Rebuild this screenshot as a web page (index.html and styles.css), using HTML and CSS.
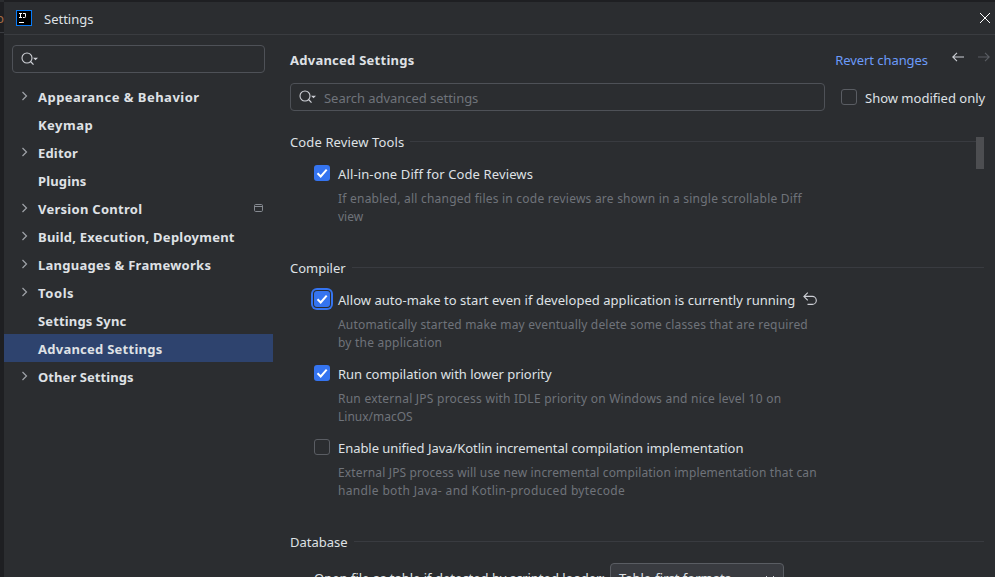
FILE: index.html
```html
<!DOCTYPE html>
<html lang="en">
<head>
<meta charset="utf-8">
<title>Settings</title>
<link rel="stylesheet" href="styles.css">
</head>
<body>
<svg class="defs" width="0" height="0">
  <symbol id="chevron" viewBox="0 0 16 16"><path d="M5.500 4l4 4-4 4" fill="none" stroke="#a0a3a9" stroke-width="1.2"/></symbol>
  <symbol id="search" viewBox="0 0 18 14"><circle cx="6" cy="6" r="5" fill="none" stroke="#ced0d6" stroke-width="1.1"/><path d="M9.500 9.500l3 3.200" stroke="#ced0d6" stroke-width="1.2"/><path d="M12 5.700h5l-2.500 2.600z" fill="#ced0d6"/></symbol>
  <symbol id="check" viewBox="0 0 16 16"><path d="M3.5 8.3l3.2 3.2 6-6.9" fill="none" stroke="#fff" stroke-width="2"/></symbol>
</svg>
<div class="backdrop"><span class="sliver">p</span><i class="edge"></i></div>
<div class="window">
  <header class="titlebar">
    <svg class="logo" width="16" height="16" viewBox="0 0 16 16"><rect x=".5" y=".5" width="15" height="15" fill="#000" stroke="#087cfa"/><path d="M3 3.5h3M4.5 3.5v4M3 7.5h3M7 3.5h2.5v3.2q0 .8-.8.8H7M3 12.5h5" fill="none" stroke="#fff"/></svg>
    <span class="title">Settings</span>
    <svg class="close" width="10" height="10" viewBox="0 0 10 10"><path d="M0 0l10 10M10 0L0 10" stroke="#fff"/></svg>
  </header>
  <div class="body">
    <aside class="sidebar">
      <div class="field side-search"><svg width="18" height="14"><use href="#search"/></svg></div>
      <nav class="tree">
        <div class="row"><svg class="chev"><use href="#chevron"/></svg><span class="n1">Appearance &amp; Behavior</span></div>
        <div class="row leaf"><span class="n2">Keymap</span></div>
        <div class="row"><svg class="chev"><use href="#chevron"/></svg><span class="n3">Editor</span></div>
        <div class="row leaf"><span class="n4">Plugins</span></div>
        <div class="row"><svg class="chev"><use href="#chevron"/></svg><span class="n5">Version Control</span><svg class="project" width="9" height="8" viewBox="0 0 9 8"><rect x=".5" y=".5" width="8" height="7" rx="1.2" fill="none" stroke="#868a91"/><path d="M1 2.5h7" stroke="#868a91"/></svg></div>
        <div class="row"><svg class="chev"><use href="#chevron"/></svg><span class="n6">Build, Execution, Deployment</span></div>
        <div class="row"><svg class="chev"><use href="#chevron"/></svg><span class="n7">Languages &amp; Frameworks</span></div>
        <div class="row"><svg class="chev"><use href="#chevron"/></svg><span class="n8">Tools</span></div>
        <div class="row leaf"><span class="n9">Settings Sync</span></div>
        <div class="row leaf selected"><span class="n10">Advanced Settings</span></div>
        <div class="row"><svg class="chev"><use href="#chevron"/></svg><span class="n11">Other Settings</span></div>
      </nav>
    </aside>
    <main class="main">
      <div class="heading">
        <h1><span class="n10">Advanced Settings</span></h1>
        <span class="revert">Revert changes</span>
        <svg class="arrows" width="38" height="10" viewBox="0 0 38 10"><path d="M12 5H1M5 .8L.8 5 5 9.2" fill="none" stroke="#ced0d6" stroke-width="1.1"/><path d="M26 5h11M33 .8L37.200 5 33 9.2" fill="none" stroke="#5a5d63" stroke-width="1.1"/></svg>
      </div>
      <div class="filter">
        <div class="field main-search"><svg width="18" height="14"><use href="#search"/></svg><span class="placeholder">Search advanced settings</span></div>
        <i class="box"></i><span class="modified">Show modified only</span>
      </div>
      <div class="content">
        <section class="s1">
          <h2><span class="g1">Code Review Tools</span></h2>
          <div class="option"><i class="box on"><svg><use href="#check"/></svg></i><span class="o1">All-in-one Diff for Code Reviews</span></div>
          <p><span class="d1">If enabled, all changed files in code reviews are shown in a single scrollable Diff</span><br><span class="d2">view</span></p>
        </section>
        <section class="s2">
          <h2><span class="g2">Compiler</span></h2>
          <div class="option"><i class="box on focus"><svg><use href="#check"/></svg></i><span class="o2">Allow auto-make to start even if developed application is currently running</span><svg class="undo" width="14" height="13" viewBox="0 0 14 13"><path d="M4.800 .6L.9 4.400l3.900 3.900M1 4.400h8.300a4 4 0 0 1 0 8H4.500" fill="none" stroke="#ced0d6" stroke-width="1.1"/></svg></div>
          <p><span class="d3">Automatically started make may eventually delete some classes that are required</span><br><span class="d4">by the application</span></p>
          <div class="option"><i class="box on"><svg><use href="#check"/></svg></i><span class="o3">Run compilation with lower priority</span></div>
          <p><span class="d5">Run external JPS process with IDLE priority on Windows and nice level 10 on</span><br><span class="d6">Linux/macOS</span></p>
          <div class="option"><i class="box"></i><span class="o4">Enable unified Java/Kotlin incremental compilation implementation</span></div>
          <p><span class="d7">External JPS process will use new incremental compilation implementation that can</span><br><span class="d8">handle both Java- and Kotlin-produced bytecode</span></p>
        </section>
        <section class="s3">
          <h2><span class="g3">Database</span></h2>
          <div class="combo-row"><span class="o5">Open file as table if detected by scripted loader:</span><div class="combo"><span class="o6">Table-first formats</span><svg width="10" height="6" viewBox="0 0 10 6"><path d="M1 1l4 4 4-4" fill="none" stroke="#ced0d6"/></svg></div></div>
        </section>
        <i class="thumb"></i>
      </div>
    </main>
  </div>
</div>
</body>
</html>
```
FILE: styles.css
```css
* { box-sizing: border-box; }
body { margin: 0; width: 995px; height: 577px; overflow: hidden; display: flex; background: #1e1f22; color: #dfe1e5; font: 13px/18px "Noto Sans", sans-serif; }
.defs { position: absolute; }
.backdrop { width: 4px; flex: none; overflow: hidden; border-top: 2px solid #2b2d30; position: relative; }
.sliver { display: block; margin: 7px 0 0 -4px; color: #a36a45; }
.edge { display: block; height: 1px; margin-top: 5px; background: #393b40; }
.window { flex: 1; min-width: 0; margin-top: 2px; background: #2b2d30; display: flex; flex-direction: column; }
.titlebar { height: 33px; flex: none; display: flex; align-items: center; padding: 0 5px 0 12px; border-bottom: 1px solid #3a3c40; }
.title { margin-left: 12px; padding-top: 2px; }
.close { margin-left: auto; }
.body { flex: 1; min-height: 0; display: flex; }
.sidebar { width: 269px; flex: none; padding-top: 10px; }
.field { height: 28px; border: 1px solid #4e5157; border-radius: 4px; display: flex; align-items: center; }
.side-search { margin: 0 8px; padding-left: 8px; width: 253px; }
.tree { margin-top: 9px; font-weight: 700; }
.row { height: 28px; display: flex; align-items: center; padding-left: 13px; white-space: nowrap; }
.row span { padding-top: 2px; }
.chev { width: 16px; height: 16px; margin-right: 5px; }
.leaf { padding-left: 34px; }
.selected { background: #2e436e; }
.project { margin-left: auto; margin-right: 10px; }
.main { flex: 1; min-width: 0; padding-left: 17px; display: flex; flex-direction: column; }
.heading { display: flex; height: 48px; flex: none; padding-top: 16px; }
h1 { margin: 0; font-size: 13px; line-height: 18px; }
.revert { color: #6b9bfa; margin-left: auto; white-space: nowrap; letter-spacing: -.06px; }
.arrows { margin: 1px 5px 0 24px; flex: none; }
.filter { display: flex; height: 28px; flex: none; align-items: center; white-space: nowrap; }
.main-search { width: 535px; padding-left: 8px; margin-right: 16px; }
.placeholder { color: #6f737a; margin-left: 7px; padding-top: 2px; letter-spacing: -.04px; }
.modified { margin-left: 8px; padding-top: 2px; }
.box { width: 16px; height: 16px; flex: none; border: 1px solid #5a5d63; border-radius: 3px; display: block; }
.on { background: #3574f0; border: 0; }
.box svg { width: 16px; height: 16px; display: block; }
.focus { box-shadow: 0 0 0 1px #2b2d30, 0 0 0 3px #3574f0; }
.content { position: relative; flex: 1; overflow: hidden; padding-top: 22px; white-space: nowrap; }
section { width: 694px; }
.s1 { height: 126px; }
.s2 { height: 274px; }
h2 { margin: 0; height: 18px; font-size: 13px; font-weight: 400; line-height: 18px; display: flex; align-items: center; gap: 6px; }
h2::after { content: ""; flex: 1; height: 1px; background: #393b40; margin-top: -1px; }
.option { height: 18px; margin-top: 14px; padding-left: 24px; display: flex; align-items: center; gap: 8px; }
.option .box { margin-top: -2px; }
.undo { margin-top: -3px; }
p { margin: 7px 0 -1px 48px; color: #6f737a; font-size: 12px; line-height: 18px; height: 36px; }
.combo-row { display: flex; margin-top: 12px; padding-left: 24px; height: 28px; }
.o5 { padding-top: 6px; width: 290px; }
.combo { width: 174px; margin-left: 6px; border: 1px solid #5a5d63; border-radius: 4px; background: #393b40; display: flex; align-items: center; padding: 2px 8px 0; justify-content: space-between; }
.thumb { position: absolute; top: 26px; left: 686px; width: 8px; height: 32px; background: #4d4e51; }

/* Per-label tracking */
.n1 { letter-spacing: .47px; }
.n2 { letter-spacing: .48px; }
.n3 { letter-spacing: .17px; }
.n4 { letter-spacing: .14px; }
.n5 { letter-spacing: .27px; }
.n6 { letter-spacing: .24px; }
.n7 { letter-spacing: .27px; }
.n8 { letter-spacing: .6px; }
.n9 { letter-spacing: .15px; }
.n10 { letter-spacing: .25px; }
.n11 { letter-spacing: .07px; }
.g1 { letter-spacing: .12px; }
.o1 { letter-spacing: .125px; }
.o2 { letter-spacing: .04px; }
.o3 { letter-spacing: -.03px; }
.o4 { letter-spacing: -.046px; }
.d1 { letter-spacing: .229px; }
.d3 { letter-spacing: .175px; }
.d4 { letter-spacing: .22px; }
.d5 { letter-spacing: .24px; }
.d7 { letter-spacing: .147px; }
.d8 { letter-spacing: .35px; }
```
